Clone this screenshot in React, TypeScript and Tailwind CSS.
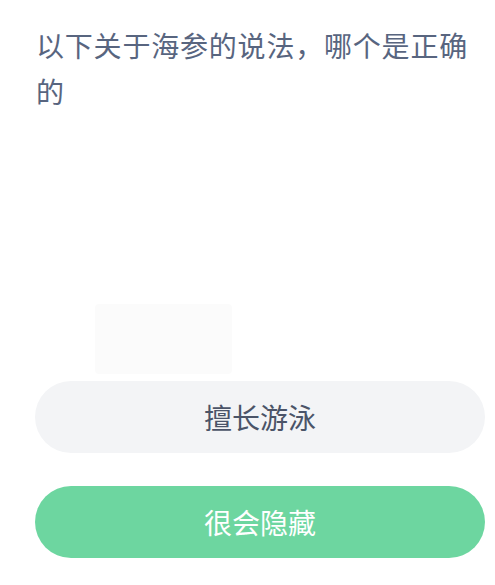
import React from "react";

const App: React.FC = () => {
  return (
    <div
      className="w-[495px] h-[585px] bg-white overflow-hidden"
      style={{ fontFamily: '"Noto Sans CJK SC", "Noto Sans", sans-serif' }}
    >
      <div className="pl-9 pr-[10px] pt-[22px]">
        <p className="text-[28px] leading-[46px] tracking-[0.8px] text-[#58657f]">
          以下关于海参的说法，哪个是正确的
        </p>
      </div>

      {/* faint watermark area */}
      <div className="h-[267px] pl-[95px] pt-[190px]">
        <div className="w-[137px] h-[70px] bg-[#fbfbfb] rounded-sm" />
      </div>

      <div className="flex flex-col gap-[33px] pl-[35px] pr-[10px]">
        <button className="h-[72px] w-full rounded-full bg-[#f3f4f6] text-[28px] text-[#4b5468]">
          擅长游泳
        </button>
        <button className="h-[72px] w-full rounded-full bg-[#6dd6a0] text-[28px] text-white">
          很会隐藏
        </button>
      </div>
    </div>
  );
};

export default App;
